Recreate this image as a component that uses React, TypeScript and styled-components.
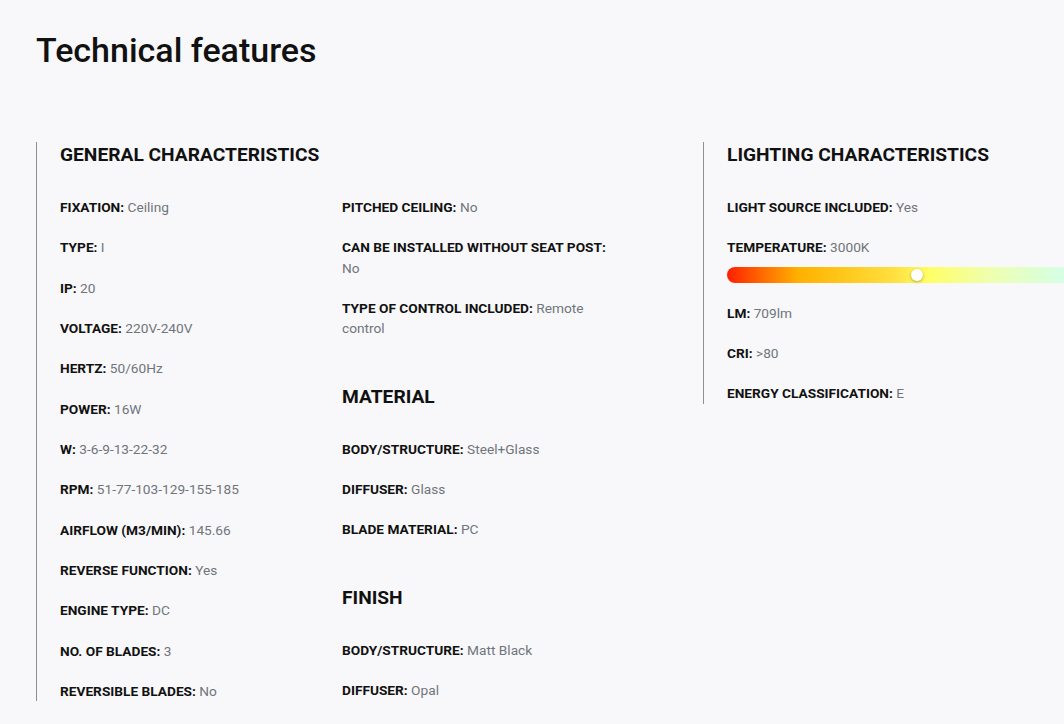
import React from "react";
import styled, { createGlobalStyle } from "styled-components";

const Global = createGlobalStyle`
  html, body {
    margin: 0;
    padding: 0;
    background: #f8f8fa;
    overflow: hidden;
  }
  body {
    font-family: Roboto, "Liberation Sans", Arial, sans-serif;
    color: #111;
  }
`;

const Page = styled.div`
  padding: 28px 0 0 36px;
  width: 1200px;
`;

const Title = styled.h1`
  margin: 0;
  font-size: 34px;
  line-height: 44px;
  font-weight: 500;
  color: #111;
`;

const Columns = styled.div`
  display: flex;
  align-items: flex-start;
  margin-top: 70px;
`;

const Section = styled.section<{ $width: number }>`
  width: ${(p) => p.$width}px;
  box-sizing: border-box;
  border-left: 1px solid #8f8f8f;
  padding-left: 23px;
`;

const SubGrid = styled.div`
  display: grid;
  grid-template-columns: 282px 282px;
  align-items: start;
`;

const Group = styled.div``;

const Heading = styled.h2<{ $first?: boolean }>`
  margin: ${(p) => (p.$first ? "0" : "45px")} 0 29px;
  font-size: 19.2px;
  line-height: 26px;
  font-weight: 700;
  color: #111;
  text-transform: uppercase;
`;

const List = styled.ul`
  list-style: none;
  margin: 0;
  padding: 0;
`;

const Item = styled.li`
  font-size: 13.7px;
  line-height: 20.33px;
  margin-bottom: 20px;
  color: #70757a;
  &:last-child {
    margin-bottom: 0;
  }
`;

const Label = styled.strong`
  font-weight: 700;
  color: #111;
`;

const Bar = styled.div`
  position: relative;
  margin-top: 9px;
  width: 440px;
  height: 16px;
  border-radius: 8px;
  background: linear-gradient(
    90deg,
    #ff1f00 0%,
    #ff6a00 8%,
    #ffb000 16%,
    #ffc61a 26%,
    #ffe040 38%,
    #ffff66 46%,
    #eeffb0 60%,
    #d6ffe4 76%,
    #bfefff 100%
  );
`;

const Knob = styled.span`
  position: absolute;
  top: 2px;
  width: 12px;
  height: 12px;
  border-radius: 50%;
  background: #fff;
  box-shadow: 0 1px 3px rgba(0, 0, 0, 0.3);
  transform: translateX(-50%);
`;

type Row = [string, string];

const generalA: Row[] = [
  ["FIXATION", "Ceiling"],
  ["TYPE", "I"],
  ["IP", "20"],
  ["VOLTAGE", "220V-240V"],
  ["HERTZ", "50/60Hz"],
  ["POWER", "16W"],
  ["W", "3-6-9-13-22-32"],
  ["RPM", "51-77-103-129-155-185"],
  ["AIRFLOW (M3/MIN)", "145.66"],
  ["REVERSE FUNCTION", "Yes"],
  ["ENGINE TYPE", "DC"],
  ["NO. OF BLADES", "3"],
  ["REVERSIBLE BLADES", "No"],
];

const generalB: Row[] = [
  ["PITCHED CEILING", "No"],
  ["CAN BE INSTALLED WITHOUT SEAT POST", "No"],
  ["TYPE OF CONTROL INCLUDED", "Remote control"],
];

const material: Row[] = [
  ["BODY/STRUCTURE", "Steel+Glass"],
  ["DIFFUSER", "Glass"],
  ["BLADE MATERIAL", "PC"],
];

const finish: Row[] = [
  ["BODY/STRUCTURE", "Matt Black"],
  ["DIFFUSER", "Opal"],
];

const Rows = ({ rows }: { rows: Row[] }) => (
  <List>
    {rows.map(([k, v]) => (
      <Item key={k + v}>
        <Label>{k}:</Label> {v}
      </Item>
    ))}
  </List>
);

export default function App() {
  return (
    <>
      <Global />
      <Page>
        <Title>Technical features</Title>
        <Columns>
          <Section $width={667}>
            <Heading $first>General characteristics</Heading>
            <SubGrid>
              <Group>
                <Rows rows={generalA} />
              </Group>
              <Group>
                <Rows rows={generalB} />
                <Heading>Material</Heading>
                <Rows rows={material} />
                <Heading>Finish</Heading>
                <Rows rows={finish} />
              </Group>
            </SubGrid>
          </Section>
          <Section $width={480}>
            <Heading $first>Lighting characteristics</Heading>
            <List>
              <Item>
                <Label>LIGHT SOURCE INCLUDED:</Label> Yes
              </Item>
              <Item>
                <Label>TEMPERATURE:</Label> 3000K
                <Bar>
                  <Knob style={{ left: "190px" }} />
                </Bar>
              </Item>
              <Item>
                <Label>LM:</Label> 709lm
              </Item>
              <Item>
                <Label>CRI:</Label> &gt;80
              </Item>
              <Item>
                <Label>ENERGY CLASSIFICATION:</Label> E
              </Item>
            </List>
          </Section>
        </Columns>
      </Page>
    </>
  );
}
